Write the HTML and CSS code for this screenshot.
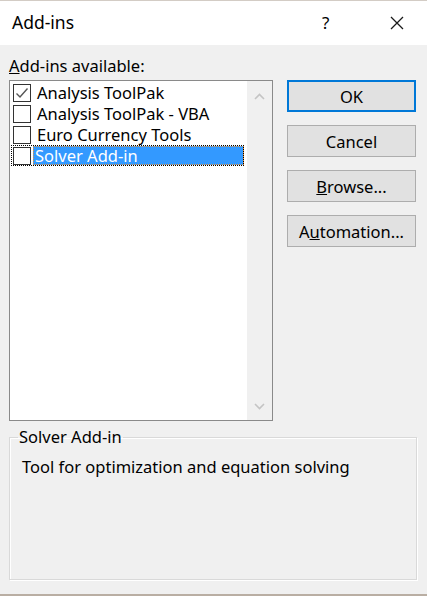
FILE: index.html
```html
<!DOCTYPE html>
<html>
<head>
<meta charset="utf-8">
<link rel="stylesheet" href="styles.css">
</head>
<body>
<div class="window">
  <div class="titlebar">
    <span class="title">Add-ins</span>
    <span class="help">?</span>
    <span class="close"><svg width="14" height="14" viewBox="0 0 14 14"><path d="M1 1L13 13M13 1L1 13" stroke="#1a1a1a" stroke-width="1.3" fill="none"/></svg></span>
  </div>
  <div class="content">
    <div class="main">
      <div class="leftcol">
        <div class="label"><u>A</u>dd-ins available:</div>
        <div class="listbox">
          <div class="items">
            <div class="item"><span class="cb"><svg width="16" height="16" viewBox="0 0 16 16"><path d="M2.5 8.5L6 12L13.5 3.5" stroke="#555" stroke-width="1.4" fill="none"/></svg></span><span class="text">Analysis ToolPak</span></div>
            <div class="item"><span class="cb"></span><span class="text">Analysis ToolPak - VBA</span></div>
            <div class="item"><span class="cb"></span><span class="text">Euro Currency Tools</span></div>
            <div class="item focus"><span class="cb"></span><span class="text sel">Solver Add-in</span></div>
          </div>
          <div class="scrollbar">
            <svg class="chev" width="11" height="7" viewBox="0 0 11 7"><path d="M1 6L5.5 1.5L10 6" stroke="#c4c4c4" stroke-width="1.6" fill="none"/></svg>
            <svg class="chev" width="11" height="7" viewBox="0 0 11 7"><path d="M1 1L5.5 5.5L10 1" stroke="#c4c4c4" stroke-width="1.6" fill="none"/></svg>
          </div>
        </div>
      </div>
      <div class="buttons">
        <button class="btn default">OK</button>
        <button class="btn">Cancel</button>
        <button class="btn"><u>B</u>rowse...</button>
        <button class="btn">A<u>u</u>tomation...</button>
      </div>
    </div>
    <fieldset class="group">
      <legend>Solver Add-in</legend>
      <div class="desc">Tool for optimization and equation solving</div>
    </fieldset>
  </div>
</div>
</body>
</html>
```

FILE: styles.css
```css
html, body {
  margin: 0;
  padding: 0;
}
body {
  width: 427px;
  height: 596px;
  font-family: "Noto Sans", "Open Sans", sans-serif;
  font-size: 16.5px;
  color: #000;
  background: #f0f0f0;
}
.window {
  height: 596px;
  box-sizing: border-box;
  border-top: 1px solid #d3ccc5;
  border-bottom: 2px solid #b9aea3;
  display: flex;
  flex-direction: column;
}
.titlebar {
  height: 44px;
  background: #fff;
  display: flex;
  align-items: center;
  flex: none;
}
.title {
  font-size: 17.5px;
  margin-left: 12px;
  flex: 1;
  padding-bottom: 2px;
}
.help {
  font-size: 17px;
  width: 14px;
  margin-right: 54px;
  padding-bottom: 2px;
}
.close {
  width: 14px;
  height: 14px;
  margin-right: 23px;
  display: flex;
}
.content {
  flex: 1;
  padding: 11px 10px 0 9px;
  display: flex;
  flex-direction: column;
}
.main {
  display: flex;
  gap: 14px;
}
.leftcol {
  width: 264px;
}
.label {
  height: 24px;
  line-height: 20px;
}
.listbox {
  height: 341px;
  box-sizing: border-box;
  border: 1px solid #8a8a8a;
  background: #fff;
  display: flex;
}
.items {
  flex: 1;
  padding-top: 1px;
}
.item {
  display: flex;
  align-items: center;
  height: 21px;
  margin-left: 3px;
  margin-right: 3px;
}
.cb {
  width: 16px;
  height: 16px;
  border: 1px solid #333;
  background: #fff;
  flex: none;
  margin-right: 4px;
  display: flex;
}
.text {
  line-height: 19px;
  padding-left: 2px;
}
.item.focus {
  outline: 1px dotted #000;
  outline-offset: -1px;
  margin-left: 1px;
  padding-left: 2px;
  margin-right: 3px;
}
.item.focus .cb {
  margin-left: 0;
  margin-right: 2px;
}
.text.sel {
  flex: 1;
  background: #3399ff;
  color: #fff;
  height: 19px;
  outline: 1px dotted #e6933a;
  outline-offset: -1px;
}
.scrollbar {
  width: 25px;
  background: #f0f0f0;
  display: flex;
  flex-direction: column;
  justify-content: space-between;
  align-items: center;
  padding: 12px 0 10px;
  box-sizing: border-box;
}
.buttons {
  width: 129px;
  display: flex;
  flex-direction: column;
  gap: 13px;
  padding-top: 24px;
}
.btn {
  height: 32px;
  box-sizing: border-box;
  background: #e1e1e1;
  border: 1px solid #adadad;
  font-family: inherit;
  font-size: 16.5px;
  color: #000;
  padding: 0;
  margin: 0;
}
.btn.default {
  border: 2px solid #0078d7;
}
.group {
  margin: 6px 0 0 0;
  padding: 0;
  width: 408px;
  height: 153px;
  box-sizing: border-box;
  border: 1px solid #d9d9d9;
  box-shadow: inset 1px 1px 0 #fff, 1px 1px 0 #fff;
}
.group legend {
  margin-left: 8px;
  padding: 0 1px;
  line-height: 20px;
}
.desc {
  padding: 8px 0 0 12px;
}
```
